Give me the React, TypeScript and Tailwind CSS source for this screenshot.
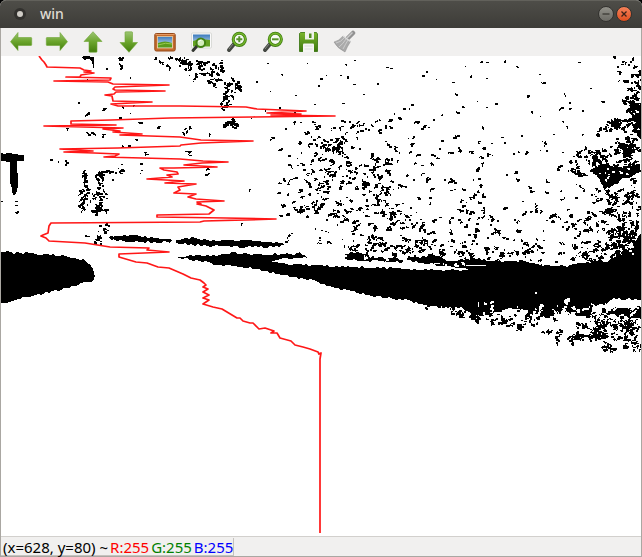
import type { ReactNode } from "react";

type Point = [number, number];

function createRandom(seed: number) {
  let state = seed;
  return () => {
    state = (state * 1664525 + 1013904223) % 4294967296;
    return state / 4294967296;
  };
}

const pixel = (x: number, y: number, w: number, h: number) => `M${x} ${y}h${w}v${h}h${-w}z`;

function blob(x: number, y: number, size: number, random: () => number) {
  let cx = Math.round(x);
  let cy = Math.round(y);
  let d = "";
  const slant = random() < 0.5 ? 1 : -1;
  for (let i = 0; i < size; i++) {
    d += pixel(cx, cy, 1 + Math.floor(random() * 2.4), 1 + Math.floor(random() * 2));
    cx += Math.floor(random() * 3) - 1;
    cy += Math.floor(random() * 3) - 1;
    if (size > 3 && random() < 0.3) {
      cx += slant;
      cy += 1;
    }
  }
  return d;
}

// x, y, width, height, number of specks, largest speck
const clusters: number[][] = [
  [172, 56, 50, 8, 20, 9],
  [178, 62, 30, 13, 10, 9],
  [206, 60, 20, 22, 16, 11],
  [224, 78, 14, 27, 22, 11],
  [223, 119, 12, 5, 14, 9],
  [180, 127, 11, 7, 6, 4],
  [183, 150, 8, 8, 4, 5],
  [82, 168, 5, 42, 20, 8],
  [95, 169, 11, 42, 36, 8],
  [108, 168, 12, 12, 6, 4],
  [96, 217, 12, 20, 9, 4],
  [106, 162, 42, 12, 6, 2],
  [85, 105, 60, 35, 6, 4],
  [45, 158, 30, 5, 5, 2],
  [240, 60, 120, 60, 16, 1],
  [340, 57, 150, 70, 32, 2],
  [490, 57, 115, 100, 32, 2],
  [280, 120, 80, 38, 36, 6],
  [312, 138, 34, 50, 40, 9],
  [275, 162, 72, 54, 68, 7],
  [340, 115, 80, 50, 34, 5],
  [345, 157, 45, 63, 50, 9],
  [385, 165, 45, 65, 36, 5],
  [410, 125, 75, 45, 20, 5],
  [430, 175, 55, 45, 28, 5],
  [480, 140, 90, 90, 36, 4],
  [310, 210, 170, 42, 84, 7],
  [345, 237, 90, 18, 40, 9],
  [442, 245, 80, 13, 35, 8],
  [475, 208, 115, 35, 40, 8],
  [510, 240, 90, 22, 44, 8],
  [615, 57, 24, 24, 17, 6],
  [625, 78, 14, 77, 54, 13],
  [598, 118, 26, 11, 20, 9],
  [610, 136, 28, 14, 18, 9],
  [567, 148, 36, 26, 36, 9],
  [588, 147, 50, 24, 50, 9],
  [575, 176, 62, 29, 28, 6],
  [604, 190, 34, 33, 42, 9],
  [585, 210, 53, 27, 45, 8],
  [608, 227, 30, 31, 75, 13],
  [580, 241, 40, 20, 28, 8],
  [425, 301, 30, 6, 12, 6],
  [450, 307, 30, 5, 14, 8],
  [470, 313, 22, 3, 8, 10],
  [492, 310, 36, 12, 18, 8],
  [525, 309, 50, 7, 24, 10],
  [547, 329, 24, 8, 10, 6],
  [567, 334, 45, 4, 20, 9],
  [575, 313, 62, 14, 46, 12],
  [590, 325, 48, 14, 34, 10],
  [602, 338, 36, 11, 20, 8],
];

// openings eaten out of the solid band, in the same form
const openings: number[][] = [
  [476, 301, 20, 12, 6, 5],
  [508, 304, 50, 8, 14, 5],
  [558, 298, 20, 20, 16, 6],
  [590, 300, 48, 8, 22, 7],
  [588, 312, 50, 22, 24, 6],
  [597, 168, 38, 6, 9, 4],
  [405, 262, 60, 4, 12, 3],
  [345, 254, 60, 5, 10, 4],
  [520, 255, 50, 10, 7, 3],
  [610, 245, 24, 8, 6, 3],
  [630, 110, 8, 28, 7, 4],
];

// x, y, size of individual marks that stand apart from the clusters
const marks: number[][] = [
  [106, 69, 2], [120, 59, 10], [119, 63, 8], [155, 58, 5], [159, 60, 7], [167, 66, 10],
  [171, 57, 6], [130, 77, 1], [86, 80, 2], [78, 102, 1], [87, 113, 7], [103, 108, 5],
  [141, 122, 4], [158, 128, 5], [89, 134, 5], [102, 136, 6], [67, 129, 3], [145, 154, 5],
  [121, 147, 3], [130, 145, 3], [101, 171, 13], [85, 235, 6], [97, 236, 14], [99, 237, 12],
  [110, 236, 6], [189, 128, 5], [209, 135, 3], [208, 169, 5], [208, 173, 5], [319, 85, 3],
  [272, 137, 4], [299, 143, 3], [309, 146, 6], [323, 145, 9], [332, 147, 6], [320, 158, 9],
  [342, 153, 9], [346, 156, 7], [379, 129, 6], [394, 146, 8], [431, 162, 8], [458, 147, 7],
  [371, 153, 8], [370, 169, 14], [374, 170, 12], [382, 185, 11], [378, 200, 16], [377, 213, 12],
  [356, 188, 8], [368, 223, 7], [375, 226, 11], [398, 184, 9], [421, 226, 8], [432, 232, 10],
  [291, 233, 6], [288, 240, 5], [241, 224, 3], [249, 189, 2], [15, 205, 2], [15, 212, 3],
  [1, 201, 1], [15, 201, 1], [518, 324, 15], [521, 325, 13], [477, 316, 6], [486, 319, 7],
  [502, 318, 9], [555, 336, 15], [536, 323, 5], [632, 88, 14], [622, 99, 13],
];

const masses: Point[][] = [
  [[176, 258], [190, 255], [213, 256], [232, 253], [254, 255], [290, 254], [300, 257], [280, 259], [270, 261], [286, 264], [300, 265], [330, 266], [365, 267], [402, 269], [440, 270], [469, 270], [465, 268], [440, 266], [407, 260], [408, 257], [438, 256], [447, 261], [473, 259], [490, 261], [524, 262], [545, 265], [567, 266], [587, 262], [607, 261], [620, 255], [631, 249], [641, 232], [641, 299], [613, 299], [603, 305], [593, 305], [590, 316], [574, 316], [563, 311], [551, 316], [527, 311], [509, 308], [488, 315], [477, 316], [461, 308], [430, 306], [405, 300], [380, 297], [360, 293], [335, 288], [310, 280], [284, 275], [250, 268], [220, 265], [193, 260]],
  [[1, 252], [20, 253], [62, 256], [80, 259], [91, 264], [95, 275], [92, 281], [75, 285], [55, 291], [26, 297], [12, 301], [1, 303]],
  [[176, 240], [192, 238], [213, 241], [250, 240], [285, 244], [279, 247], [240, 247], [210, 246], [176, 243]],
  [[109, 237], [130, 235], [145, 237], [172, 240], [170, 242], [145, 242], [111, 240]],
  [[284, 255], [300, 253], [307, 257], [288, 259]],
  [[345, 253], [366, 253], [370, 257], [403, 259], [403, 262], [370, 261], [345, 259]],
  [[1, 153], [13, 153], [24, 155], [24, 161], [17, 162], [18, 183], [16, 194], [13, 194], [10, 183], [10, 163], [1, 161]],
  [[79, 56], [94, 56], [94, 68], [91, 60], [84, 59]],
  [[592, 168], [602, 164], [620, 168], [640, 164], [640, 173], [622, 179], [614, 185], [604, 189], [598, 178]],
  [[631, 106], [641, 105], [641, 139], [634, 133]],
  [[610, 121], [619, 120], [620, 128], [611, 127]],
  [[575, 335], [609, 335], [608, 338], [580, 338]],
  [[602, 308], [641, 307], [641, 319], [620, 315], [602, 314]],
];

const rays: Point[] = [
  [39, 56], [42, 60], [43, 61], [44, 62], [46, 65], [47, 67], [80, 68], [84, 70], [91, 71], [84, 72],
  [94, 73], [81, 75], [80, 77], [66, 77], [111, 78], [110, 80], [54, 81], [108, 82], [113, 84], [169, 85],
  [115, 87], [113, 89], [115, 90], [165, 91], [116, 92], [114, 94], [105, 95], [112, 96], [113, 101],
  [152, 102], [111, 104], [118, 106], [180, 106], [246, 107], [257, 109], [306, 111], [267, 113],
  [301, 114], [271, 115], [335, 116], [253, 117], [170, 118], [111, 120], [71, 121], [71, 124],
  [116, 125], [44, 126], [123, 128], [103, 129], [120, 131], [113, 132], [142, 134], [120, 135],
  [180, 137], [201, 140], [253, 141], [201, 143], [181, 145], [180, 146], [118, 148], [60, 149],
  [93, 151], [64, 152], [94, 153], [119, 154], [115, 156], [104, 157], [180, 159], [203, 161],
  [228, 162], [202, 163], [184, 165], [217, 167], [174, 168], [160, 168], [164, 170], [177, 172],
  [178, 174], [167, 175], [172, 177], [147, 179], [184, 181], [165, 183], [196, 184], [178, 187],
  [180, 190], [174, 193], [196, 194], [188, 197], [196, 199], [224, 201], [197, 202], [201, 204],
  [197, 204], [206, 206], [210, 208], [214, 210], [209, 214], [157, 215], [157, 217], [226, 218],
  [276, 219], [204, 221], [200, 222], [51, 223], [49, 226], [48, 233], [43, 235], [41, 236], [46, 238],
  [49, 241], [85, 243], [110, 247], [149, 248], [147, 250], [169, 252], [119, 254], [119, 257],
  [136, 262], [147, 263], [158, 267], [169, 268], [183, 274], [191, 278], [200, 280], [204, 283],
  [206, 285], [203, 287], [208, 289], [203, 292], [209, 295], [203, 298], [209, 300], [203, 304],
  [213, 307], [222, 309], [237, 318], [240, 318], [243, 321], [250, 323], [253, 323], [259, 329],
  [265, 328], [274, 331], [271, 333], [277, 333], [280, 338], [291, 341], [295, 345], [303, 347],
  [310, 349], [318, 352], [319, 354], [321, 353], [320, 359], [320, 533],
];

const random = createRandom(31);

const scatter = (areas: number[][]) =>
  areas
    .flatMap(([x, y, w, h, count, largest]) =>
      Array.from({ length: count }, () =>
        blob(x + random() * w, y + random() * h, 1 + Math.floor(random() ** 1.6 * largest * 1.3), random),
      ),
    )
    .join("");

const speckPath = scatter(clusters) + marks.map(([x, y, size]) => blob(x, y, size, random)).join("");
const openingPath = scatter(openings);

function roughen(points: Point[]) {
  return points
    .map(([x, y], index) => {
      const [nx, ny] = points[(index + 1) % points.length];
      const steps = Math.max(1, Math.round(Math.hypot(nx - x, ny - y) / 3));
      let d = "";
      for (let i = 0; i < steps; i++) {
        const px = Math.round(x + ((nx - x) * i) / steps);
        const py = Math.round(y + ((ny - y) * i) / steps + (random() - 0.5) * 2);
        d += `${index === 0 && i === 0 ? "M" : "L"}${px} ${py}`;
      }
      return d;
    })
    .join("") + "z";
}

const massPath = masses.map(roughen).join("");

function Glass({ sign }: { sign: string }) {
  return (
    <>
      <path d="M9 14 4 20" stroke="#444842" strokeWidth="4" strokeLinecap="round" />
      <path d="M8 14 4 19" stroke="#858982" strokeWidth="1" />
      <circle cx="14.3" cy="9.3" r="6.1" fill="#f8fbf4" stroke="#3d7d10" strokeWidth="3" />
      <circle cx="14.3" cy="9.3" r="6.1" stroke="#76b52c" strokeWidth="1.4" />
      <path d={sign} stroke="#57932a" strokeWidth="2" />
    </>
  );
}

function Magnified() {
  return (
    <>
      <rect x="2.5" y="3" width="20" height="15" rx="1" fill="#fafafa" stroke="#c7c9c5" strokeWidth=".6" />
      <path d="M4 4.5h17v12H4z" fill="url(#sky)" />
      <path d="M4 11q6-3 17-1v6.500H4z" fill="#65a224" />
      <path d="m8 16-4 4.500" stroke="#343832" strokeWidth="3" strokeLinecap="round" />
      <circle cx="11.8" cy="12.800" r="4.300" fill="#d4edbd" stroke="#438213" strokeWidth="2" />
      <path d="M9.500 12q1-2 3-2" stroke="#fff" />
    </>
  );
}

const tools: { name: string; art: ReactNode }[] = [
  { name: "Pan left", art: <path d="M1.500 11.700 9 2.500v5h13q.7 0 .7.7v6.600q0 .7-.7.7H9v5z" fill="url(#leaf)" stroke="#6ea636" strokeWidth=".6" /> },
  { name: "Pan right", art: <path d="M22.500 11.700 15 2.500v5H2q-.7 0-.7.7v6.600q0 .7.7.7h13v5z" fill="url(#leaf)" stroke="#6ea636" strokeWidth=".6" /> },
  { name: "Pan up", art: <path d="m12 1.700 9 9.800h-5v10q0 .7-.7.7H8.700q-.7 0-.7-.7v-10H3z" fill="url(#leaf)" stroke="#6ea636" strokeWidth=".6" /> },
  { name: "Pan down", art: <path d="m12 22.300 8.500-9.800h-5V2.500q0-.7-.7-.7H8.700q-.7 0-.7.7v10H3z" fill="url(#leaf)" stroke="#6ea636" strokeWidth=".6" /> },
  {
    name: "Original size",
    art: (
      <>
        <rect x="1.800" y="3.500" width="20.400" height="17.500" rx="1.500" fill="#c46b2d" stroke="#934819" />
        <path d="M2.500 4.500h19" stroke="#e69a62" />
        <rect x="4.500" y="6.500" width="15" height="11.500" fill="url(#sky)" stroke="#e9cfa4" strokeWidth=".8" />
        <path d="M5 13q7-3 14 0v4.500H5z" fill="#5b9b1c" />
        <path d="M5 15q8-3 14-1" stroke="#98c84d" />
      </>
    ),
  },
  { name: "Fit to window", art: <Magnified /> },
  { name: "Zoom in", art: <Glass sign="M14.300 6.300v6m-3-3h6" /> },
  { name: "Zoom out", art: <Glass sign="M11 9.300h6.600" /> },
  {
    name: "Save image",
    art: (
      <>
        <path d="M3.500 2.500h16l1 1.500v17.500h-18V3.500z" fill="url(#disk)" stroke="#35720c" strokeWidth=".8" />
        <path d="M8 2h9v7.500H8z" fill="#eff1ec" />
        <path d="M12 3.500h2.500V8H12z" fill="#508c20" />
        <path d="M6 14.500q0-1 1-1h9q1 0 1 1V22H6z" fill="#f5f5f3" />
        <path d="M7.500 16h8m-8 3h8" stroke="#ddd" />
      </>
    ),
  },
  {
    name: "Properties",
    art: (
      <>
        <path d="m14 9 6-6" stroke="#929292" strokeWidth="4.500" strokeLinecap="round" />
        <path d="m14 8 5.500-5.500" stroke="#ccc" strokeWidth="1.500" />
        <path d="m10 6 7.500 5.500Q14 17 12 22 4 18 1 12q5-1 9-6z" fill="#aaa" stroke="#898989" strokeWidth=".5" />
        <path d="M11 8Q8 12 3 13m10-4q-3 5-7 8m9-7q-3 5-5 9" stroke="#d5d5d5" strokeWidth=".8" />
        <path d="m10 6 7.500 5.500" stroke="#ddd" strokeWidth="1.500" />
      </>
    ),
  },
];

function Gradients() {
  return (
    <svg className="absolute size-0" aria-hidden="true">
      <defs>
        <linearGradient id="leaf" x1="0" y1="0" x2="0" y2="1">
          <stop stopColor="#9cc573" />
          <stop offset=".5" stopColor="#6ba52c" />
          <stop offset="1" stopColor="#437e0c" />
        </linearGradient>
        <linearGradient id="disk" x1="0" y1="0" x2="0" y2="1">
          <stop stopColor="#79b52d" />
          <stop offset="1" stopColor="#3d770d" />
        </linearGradient>
        <linearGradient id="sky" x1="0" y1="0" x2="0" y2="1">
          <stop stopColor="#3979bd" />
          <stop offset="1" stopColor="#e5f1f6" />
        </linearGradient>
      </defs>
    </svg>
  );
}

export default function App() {
  return (
    <main className="w-full bg-black font-['Noto_Sans',sans-serif]">
      <Gradients />
      <div className="rounded-t-md border-b border-[#aaa7a2] bg-[#f1f0ef]">
        <header className="flex h-7 items-center rounded-t-md border-t border-[#62615b] bg-linear-to-b from-[#4e4d48] to-[#3d3c38] pr-2.5 pb-px pl-3.5">
          <span className="flex size-3 items-center justify-center rounded-full bg-[#32312e]">
            <span className="size-1.5 rounded-full bg-[#d0cdc7]" />
          </span>
          <h1 className="ml-3.5 flex-1 text-sm leading-5 font-medium text-[#dfdbd2]">win</h1>
          <div className="flex gap-0.5">
            <button aria-label="Minimize" className="flex size-4 items-center justify-center rounded-full border border-[#33322f] bg-linear-to-b from-[#92918a] to-[#6c6b65]">
              <svg viewBox="0 0 14 14" className="size-3.5 shrink-0"><path d="M3.500 7h7" stroke="#363530" strokeWidth="1.200" /></svg>
            </button>
            <button aria-label="Close" className="flex size-4 items-center justify-center rounded-full border border-[#33322f] bg-linear-to-b from-[#f58158] to-[#df4e1c]">
              <svg viewBox="0 0 14 14" className="size-3.5 shrink-0"><path d="m4.500 4.500 5 5m0-5-5 5" stroke="#3b2219" strokeWidth="1.300" /></svg>
            </button>
          </div>
        </header>
        <div className="border-x border-[#aaa7a2]">
          <div role="toolbar" aria-label="Image tools" className="flex h-7 items-center pl-0.5">
            {tools.map(({ name, art }) => (
              <button key={name} aria-label={name} className="flex h-7 w-9 items-center justify-center">
                <svg viewBox="0 0 24 24" fill="none" className="size-6">{art}</svg>
              </button>
            ))}
          </div>
          <svg viewBox="1 56 640 480" className="block w-full bg-white" role="img" aria-label="Thresholded road image with boundary trace">
            <g shapeRendering="crispEdges">
              <path d={massPath} />
              <path d={speckPath} />
              <path fill="#fff" d={openingPath} />
              <path fill="#fff" d="M466 265h20v1h-20zM540 263h25v1h-25zM415 266h35v2h-35zM421 264h12v1h-12zM535 292h2v2h-2zM478 302h1v5h-1z" />
            </g>
            <polyline points={rays.map((point) => point.join(",")).join(" ")} fill="none" stroke="#ff1717" strokeWidth="1.700" strokeLinejoin="round" />
          </svg>
          <footer className="flex h-5 border-t border-[#d2d0cd]">
            <output className="mt-px flex h-[18px] items-center gap-0.5 border-r border-b border-[#c5c2be] pl-0.5 text-[15px] leading-4 whitespace-nowrap text-black">
              <span>(x=628, y=80) ~</span>
              <span className="text-[#ff0000]">R:255</span>
              <span className="text-[#008000]">G:255</span>
              <span className="text-[#0000ff]">B:255</span>
            </output>
          </footer>
        </div>
      </div>
    </main>
  );
}
